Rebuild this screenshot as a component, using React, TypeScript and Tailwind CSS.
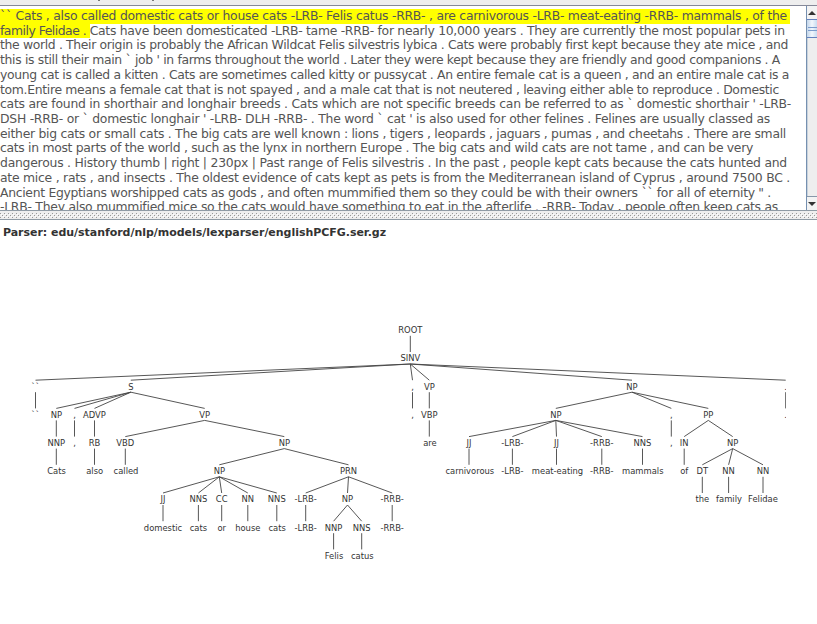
import { useLayoutEffect, useRef } from 'react';
import type { ReactNode } from 'react';

type Node = { t: string; x: number; c?: Node[] };

const n = (t: string, x: number, ...c: Node[]): Node => ({ t, x, c });

const tree: Node = n('ROOT', 410.3,
  n('SINV', 410.3,
    n('``', 35.5, n('``', 35.5)),
    n('S', 130.8,
      n('NP', 56.3, n('NNP', 56.3, n('Cats', 56.5))),
      n(',', 74.5, n(',', 74.5)),
      n('ADVP', 94.5, n('RB', 94.5, n('also', 94.7))),
      n('VP', 204.7,
        n('VBD', 125.3, n('called', 126)),
        n('NP', 284.3,
          n('NP', 219.3,
            n('JJ', 163, n('domestic', 163)),
            n('NNS', 198.4, n('cats', 198.4)),
            n('CC', 221.7, n('or', 221.7)),
            n('NN', 247.8, n('house', 247.8)),
            n('NNS', 276.8, n('cats', 277.2))),
          n('PRN', 348.5,
            n('-LRB-', 305.7, n('-LRB-', 305.7)),
            n('NP', 347.5,
              n('NNP', 333.6, n('Felis', 334)),
              n('NNS', 361.7, n('catus', 362.3))),
            n('-RRB-', 392.2, n('-RRB-', 392.2)))))),
    n(',', 412.5, n(',', 412.5)),
    n('VP', 429.3, n('VBP', 429.3, n('are', 430))),
    n('NP', 632,
      n('NP', 555.8,
        n('JJ', 469, n('carnivorous', 469.8)),
        n('-LRB-', 512.4, n('-LRB-', 512.4)),
        n('JJ', 556.5, n('meat-eating', 557.5)),
        n('-RRB-', 601.8, n('-RRB-', 601.8)),
        n('NNS', 642.5, n('mammals', 642.8))),
      n(',', 671.3, n(',', 671.3)),
      n('PP', 708.3,
        n('IN', 684.2, n('of', 684.2)),
        n('NP', 732.7,
          n('DT', 702.3, n('the', 702.3)),
          n('NN', 728.6, n('family', 729)),
          n('NN', 763, n('Felidae', 763))))),
    n('.', 785.7, n('.', 785.7))));

function Branch({ node, depth }: { node: Node; depth: number }) {
  const y = 113.2 + depth * 28.2;
  const only = node.c?.length === 1;
  return (
    <g>
      <text x={node.x} y={y} textAnchor="middle">{node.t}</text>
      {node.c?.map((k, i) => (
        <g key={i}>
          <line x1={node.x} y1={y + 2.6} x2={only ? node.x : k.x} y2={y + 18.8} />
          <Branch node={k} depth={depth + 1} />
        </g>
      ))}
    </g>
  );
}

/* A text line whose letter spacing is fitted to the given width. */
function Line({ w, children }: { w: number; children: ReactNode }) {
  const ref = useRef<HTMLSpanElement>(null);
  useLayoutEffect(() => {
    const el = ref.current!;
    el.style.letterSpacing = '0px';
    const len = (el.textContent || '').length;
    el.style.letterSpacing = `${(w - el.getBoundingClientRect().width) / len}px`;
  }, [w]);
  return (
    <div className="h-[14.73px] shrink-0 leading-[14.73px]">
      <span ref={ref} className="inline-block whitespace-pre">{children}</span>
    </div>
  );
}

const lines: [string, number][] = [
  ['the world . Their origin is probably the African Wildcat Felis silvestris lybica . Cats were probably first kept because they ate mice , and', 788],
  ["this is still their main ` job ' in farms throughout the world . Later they were kept because they are friendly and good companions . A", 780],
  ['young cat is called a kitten . Cats are sometimes called kitty or pussycat . An entire female cat is a queen , and an entire male cat is a', 789],
  ['tom.Entire means a female cat that is not spayed , and a male cat that is not neutered , leaving either able to reproduce . Domestic', 779],
  ["cats are found in shorthair and longhair breeds . Cats which are not specific breeds can be referred to as ` domestic shorthair ' -LRB-", 791],
  ["DSH -RRB- or ` domestic longhair ' -LRB- DLH -RRB- . The word ` cat ' is also used for other felines . Felines are usually classed as", 770],
  ['either big cats or small cats . The big cats are well known : lions , tigers , leopards , jaguars , pumas , and cheetahs . There are small', 786],
  ['cats in most parts of the world , such as the lynx in northern Europe . The big cats and wild cats are not tame , and can be very', 753],
  ['dangerous . History thumb | right | 230px | Past range of Felis silvestris . In the past , people kept cats because the cats hunted and', 787],
  ['ate mice , rats , and insects . The oldest evidence of cats kept as pets is from the Mediterranean island of Cyprus , around 7500 BC .', 790],
  ['Ancient Egyptians worshipped cats as gods , and often mummified them so they could be with their owners `` for all of eternity " .', 771],
  ['-LRB- They also mummified mice so the cats would have something to eat in the afterlife . -RRB- Today , people often keep cats as', 778],
];

export default function App() {
  return (
    <div className="flex h-[624px] w-[817px] flex-col overflow-hidden bg-white font-['DejaVu_Sans',sans-serif] text-[#555555]">
      <div className="flex h-[6px] shrink-0 items-start gap-[52px] border-b border-[#858999] bg-[#eeeeee] pl-[98px]">
        <div className="h-px w-[2px] bg-[#777777]" />
        <div className="h-px w-[2px] bg-[#777777]" />
      </div>
      <div className="flex h-[204px] shrink-0 overflow-hidden">
        <div className="flex h-full w-[806px] shrink-0 flex-col overflow-hidden pt-[3px] text-[12.4px]">
          <div className="flex shrink-0">
            <div className="bg-[#ffff00] pr-[3px]"><Line w={787}>`` Cats , also called domestic cats or house cats -LRB- Felis catus -RRB- , are carnivorous -LRB- meat-eating -RRB- mammals , of the</Line></div>
          </div>
          <div className="flex shrink-0">
            <div className="bg-[#ffff00]"><Line w={89.7}>{'family Felidae . '}</Line></div>
            <Line w={695}>Cats have been domesticated -LRB- tame -RRB- for nearly 10,000 years . They are currently the most popular pets in</Line>
          </div>
          {lines.map(([t, w]) => <Line key={t} w={w}>{t}</Line>)}
        </div>
        <div className="flex w-[11px] shrink-0 flex-col border-l border-[#7590b0] bg-[#eeeeee]">
          <div className="flex h-[13px] items-center justify-center bg-[#f3f3f3]">
            <svg width="8" height="4"><path d="M0 4L4 0L8 4Z" fill="#333" /></svg>
          </div>
          <div className="flex h-[19px] flex-col items-end justify-center gap-[2px] border-y border-[#6382bf] bg-linear-to-r from-[#c3d6eb] via-[#f2f7fc] to-[#c8dcf0]">
            <div className="h-px w-[9px] bg-[#7c9ccc]" />
            <div className="h-px w-[9px] bg-[#7c9ccc]" />
          </div>
          <div className="flex-1 border-l border-[#c8d2dc]" />
          <div className="flex h-[14px] items-center justify-center border-t border-[#8797a9] bg-[#f3f3f3]">
            <svg width="8" height="4"><path d="M0 0L4 4L8 0Z" fill="#333" /></svg>
          </div>
        </div>
      </div>
      <div className="h-[10px] shrink-0 border-y border-[#8f9ba5] bg-[#eeeeee] py-[2px]">
        <svg width="817" height="5" className="block">
          <defs>
            <pattern id="grip" width="4" height="4" patternUnits="userSpaceOnUse">
              <rect width="1" height="1" x="0" y="0" fill="#999999" />
              <rect width="1" height="1" x="1" y="1" fill="#ffffff" />
              <rect width="1" height="1" x="2" y="2" fill="#999999" />
              <rect width="1" height="1" x="3" y="3" fill="#ffffff" />
            </pattern>
          </defs>
          <rect width="817" height="5" fill="url(#grip)" />
        </svg>
      </div>
      <div className="flex flex-1 flex-col">
        <div className="flex h-[24px] shrink-0 items-center pl-[3px] pt-[2px] text-[11px] font-bold text-[#333333]">
          <Line w={383}>Parser: edu/stanford/nlp/models/lexparser/englishPCFG.ser.gz</Line>
        </div>
        <svg width="786" height="380" viewBox="0 24 786 380" className="block fill-[#333333] text-[8.4px] [&_line]:stroke-[#444444] [&_line]:stroke-[0.9]">
          <Branch node={tree} depth={0} />
        </svg>
      </div>
    </div>
  );
}
